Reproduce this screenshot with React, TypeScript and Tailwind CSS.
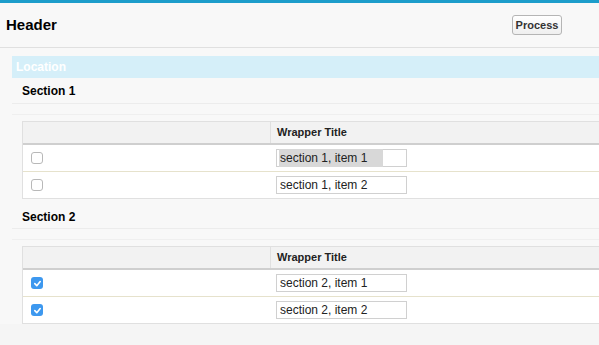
import React from 'react';

type Item = { label: string; checked: boolean; selected?: boolean };

const sections: { title: string; items: Item[] }[] = [
  {
    title: 'Section 1',
    items: [
      { label: 'section 1, item 1', checked: false, selected: true },
      { label: 'section 1, item 2', checked: false },
    ],
  },
  {
    title: 'Section 2',
    items: [
      { label: 'section 2, item 1', checked: true },
      { label: 'section 2, item 2', checked: true },
    ],
  },
];

function Checkbox({ checked }: { checked: boolean }) {
  if (checked) {
    return (
      <div className="w-[12px] h-[12px] rounded-[3px] bg-[#3d98ef] flex items-center justify-center">
        <svg width="9" height="9" viewBox="0 0 10 10">
          <path d="M2 5.2 L4.2 7.4 L8 2.8" fill="none" stroke="#fff" strokeWidth="1.8" strokeLinecap="round" strokeLinejoin="round" />
        </svg>
      </div>
    );
  }
  return <div className="w-[12px] h-[12px] rounded-[3px] border border-[#b8b8b8] bg-white" />;
}

export default function App() {
  return (
    <div className="w-[599px] h-[345px] overflow-hidden bg-[#f5f5f5] border-t-[3px] border-[#1d9dcb] font-['Liberation_Sans',Arial,sans-serif] text-[#222]">
      <div className="bg-[#f8f8f8]">
        <div className="h-[45px] flex items-center justify-between pl-[6px] pr-[37px] border-b border-[#e0e0e0]">
          <h2 className="text-[15px] font-bold text-black">Header</h2>
          <button className="w-[50px] h-[20px] rounded-[3px] border border-[#b5b5b5] bg-gradient-to-b from-white to-[#efefef] text-[11px] font-bold text-[#333]">
            Process
          </button>
        </div>

        <div className="pt-[8px] pl-[12px]">
          <div className="h-[22px] bg-[#d5eff9] flex items-center pl-[4px] text-[12px] font-bold text-white">Location</div>
        </div>
      </div>

      {sections.map((s, si) => (
        <div key={s.title} className={si === 0 ? 'pb-[4px] bg-[#f8f8f8]' : 'bg-[#f8f8f8]'}>
          <div className="ml-[12px]">
            <div className="h-[26px] flex items-center pl-[10px] border-b border-[#ececec]">
              <span className={`text-[12px] font-bold text-black ${si === 0 ? 'mt-[1px]' : 'mt-[2px]'}`}>{s.title}</span>
            </div>
            <div className="h-[11px] border-b border-[#efefef]" />
          </div>
          <div className="ml-[22px] mt-[6px] w-[600px] border-l border-[#e0e0e0]">
            <div className="h-[24px] flex bg-[#f2f2f2] border-t border-[#e0e0e0] border-b-2 border-b-[#cfcfcf]">
              <div className="w-[248px] border-r border-[#e0e0e0]" />
              <div className="pl-[6px] flex items-center text-[11px] font-bold text-[#222]">Wrapper Title</div>
            </div>
            {s.items.map((it, i) => (
              <div
                key={it.label}
                className={`h-[27px] flex items-center bg-white border-b ${i === s.items.length - 1 ? 'border-[#e0e0e0]' : 'border-[#e6e2cc]'}`}
              >
                <div className="w-[248px] pl-[8px] flex items-center">
                  <Checkbox checked={it.checked} />
                </div>
                <div className="pl-[5px] flex items-center">
                  <div className="w-[131px] h-[18px] border border-[#d0d0d0] bg-white flex items-center pl-[2px] text-[12px] text-[#222]">
                    <span className={it.selected ? 'bg-[#d8d8d8] pl-[1px] pr-[16px]' : 'pl-[1px]'}>{it.label}</span>
                  </div>
                </div>
              </div>
            ))}
          </div>
        </div>
      ))}
    </div>
  );
}
